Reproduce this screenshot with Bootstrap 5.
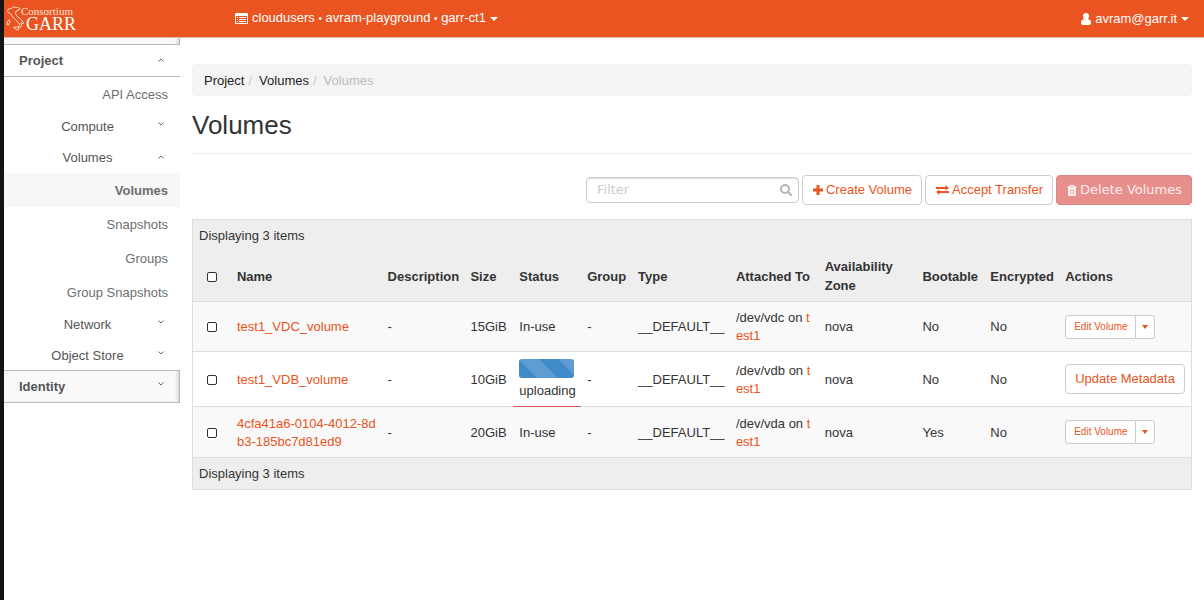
<!DOCTYPE html>
<html lang="en">
<head>
<meta charset="utf-8">
<meta name="viewport" content="width=device-width, initial-scale=1">
<title>Volumes</title>
<link href="https://cdn.jsdelivr.net/npm/bootstrap@5.3.0/dist/css/bootstrap.min.css" rel="stylesheet">
<style>
  :root { --brand: #ea5420; --line: #ddd; --edge: #ccc; }
  body { font: 13px/18px "Liberation Sans", Arial, sans-serif; color: #333; border-left: 4px solid #141414; min-height: 100vh; background: #fff; }
  a { color: var(--brand); text-decoration: none; }
  svg { display: block; fill: currentColor; }

  .topbar { background: var(--brand); border-bottom: 1px solid #d5bfb6; height: 38px; color: #fff; }
  .topbar a { color: #fff; gap: 4px; }
  .brand-box { width: 231px; }
  .account { margin-right: 15px; }
  .dot { font-size: 10px; }
  .tri { width: 0; height: 0; border: 4px solid transparent; border-top-color: currentColor; border-bottom: 0; }

  .side { width: 176px; color: #555; }
  .side a { display: flex; align-items: center; color: #555; }
  .side-stub { height: 7px; }
  .side-shade { background: #f9f9f9; border-right: 1px solid #b5b5b5; border-bottom: 1px solid #bbb; box-shadow: inset -3px 0 3px -1px #ddd; }
  .side .side-top { height: 32px; padding: 0 16px 0 15px; font-weight: 700; justify-content: space-between; }
  .side .side-open { border-bottom: 1px solid #bbb; }
  .side .side-closed { height: 33px; border-top: 1px solid #bbb; padding-right: 15px; margin-top: -1px; }
  .side .side-group { height: 31px; padding: 0 16px 0 13px; }
  .side-group span { flex: 1; text-align: center; }
  .side .side-leaf { height: 34px; padding: 1px 12px 0 0; justify-content: flex-end; color: #6e6e6e; }
  .side .side-leaf.current { background: #f7f7f7; font-weight: 700; }
  .chev { width: 6px; height: 4px; fill: none; stroke: #666; }
  .chev.down { margin-bottom: 5px; }
  .chev.up { margin-bottom: 1px; }

  .main-area { padding: 26px 12px; min-width: 0; }
  .crumbs { background: #f4f4f4; border-radius: 4px; padding: 8px 12px 6px; --bs-breadcrumb-divider: "/"; }
  .crumbs a { color: #222; }
  .crumbs .breadcrumb-item + .breadcrumb-item { padding-left: 4px; color: #bbb; }
  .crumbs .breadcrumb-item + .breadcrumb-item::before { color: #ccc; padding-right: 7px; }
  .page-title { font-size: 26px; line-height: 30px; font-weight: 400; padding: 14px 0 13px; border-bottom: 1px solid #eee; margin-bottom: 21px; }

  .tools { gap: 3px; margin-bottom: 14px; }
  .tools .btn, .meta-btn { font-size: 13px; line-height: 18px; padding: 5px 9px 5px 10px; border-radius: 4px; display: flex; align-items: center; gap: 3px; }
  .btn.meta-btn { padding: 5px 9px; }
  .btn-plain { color: var(--brand); background: #fff; border-color: var(--edge); }
  .btn-plain:hover { color: var(--brand); background: #eee; border-color: #aaa; }
  .tools .btn-del { font-family: "DejaVu Sans", sans-serif; color: #fcecec; background: #e78f8d; border-color: #e08280; opacity: 1; }
  .filter-box { width: 213px; }
  .filter-box .form-control { font: 13px/18px "DejaVu Sans", sans-serif; height: 26px; padding: 2px 28px 4px 10px; border-color: var(--edge); border-radius: 4px; box-shadow: inset 0 1px 1px #ddd; }
  .filter-box .form-control::placeholder { color: #ccc; }
  .filter-box svg { right: 7px; top: 7px; color: #b5b5b5; }

  .vol-table { table-layout: fixed; width: 100%; border: 1px solid var(--line); border-collapse: separate; border-spacing: 0; }
  .vol-table th, .vol-table td { padding: 6px; vertical-align: middle; }
  .vol-table tbody td, .vol-table tfoot td { border-top: 1px solid var(--line); }
  .vol-table thead, .vol-table tfoot { background: #eee; }
  .vol-table thead tr:first-child td { height: 32px; }
  .vol-table thead th { height: 49px; line-height: 19px; padding: 5px 6px; white-space: nowrap; }
  .vol-table .wrap-head { white-space: normal; padding: 4px 6px 6px; }
  .vol-table tbody tr { height: 50px; }
  .vol-table tbody tr:nth-child(odd) { background: #f9f9f9; }
  .vol-table tbody tr + tr { height: 51px; }
  .vol-table tbody tr + tr td { padding-top: 8px; }
  .vol-table tbody tr + tr td:last-child { padding-top: 6px; }
  .vol-table tbody tr.busy { height: 55px; }
  .vol-table tfoot td { height: 32px; }
  .break-any { word-break: break-all; }
  .vol-table tbody .vol-name { padding-right: 2px; }
  .vol-table .pick { padding-left: 14px; }
  .pick input { display: block; appearance: none; width: 10px; height: 10px; border: 1px solid #333; border-radius: 2px; margin: 0; background: #fff; }
  .pick input:checked { background: #333; }
  .vol-table tbody tr.busy .busy-cell { padding-top: 7px; position: relative; z-index: 1; box-shadow: 0 1px 0 #d9534f; }
  .busy-bar { height: 19px; border-radius: 3px; margin-bottom: 4px; width: 55px; }
  .busy-bar .progress-bar { background-color: #428bca; background-size: 40px 40px; background-image: linear-gradient(45deg, rgba(255,255,255,.15) 25%, transparent 25%, transparent 50%, rgba(255,255,255,.15) 50%, rgba(255,255,255,.15) 75%, transparent 75%); }
  .row-act .btn { font-size: 10px; line-height: 14px; padding: 4px 7px 4px 8px; border-radius: 3px; }
  .row-act .btn.more { padding: 4px 6px; display: flex; align-items: center; }
  .more .tri { border-width: 4px 3px 0; }
</style>
</head>
<body>
<header class="topbar d-flex align-items-center">
  <a class="brand-box" href="#" aria-label="Consortium GARR">
    <svg width="76" height="34" viewBox="0 0 76 34">
      <path d="M3.500 9l1-2 3-.5 2-1.500 4 .5 2.500 1-1 1.500-3 1-.5 2.500 1.500 3 3.500 2.500 3 3.500-.5 1.500-2-1.500.5 3-2 2.500-1-.5 1-3-2.500-3.500-4-3.500-2.500-4-2-.5zM3.500 19.500l2-1.500.5 2-1.500 3-1.500-.5zM9.500 25.500l2.500-.5 2.500 0-.5 3-2-.5z" fill="none" stroke="#fbd5c8"/>
      <text x="17" y="13" font-family="Liberation Serif, serif" font-size="11" fill="#fde3da">Consortium</text>
      <text x="22" y="28" font-family="Liberation Serif, serif" font-size="18" fill="#fff">GARR</text>
    </svg>
  </a>
  <a class="d-flex align-items-center" href="#">
    <svg width="13" height="11" viewBox="0 0 13 11"><path fill-rule="evenodd" d="M1 0h11a1 1 0 0 1 1 1v9a1 1 0 0 1-1 1H1a1 1 0 0 1-1-1V1a1 1 0 0 1 1-1zM1 3v7h11V3zM2 4h1v1H2zM4 4h7v1H4zM2 6h1v1H2zM4 6h7v1H4zM2 8h1v1H2zM4 8h7v1H4z"/></svg>
    <span>cloudusers <span class="dot">•</span> avram-playground <span class="dot">•</span> garr-ct1</span><span class="tri"></span>
  </a>
  <a class="account d-flex align-items-center ms-auto" href="#">
    <svg width="10" height="12" viewBox="0 0 10 12"><path d="M5 0a3 3 0 0 1 3 3c0 1.500-.6 2.600-1.300 3.200C8.800 6 10 7.500 10 10c0 1.200-.8 2-2 2H2c-1.200 0-2-.8-2-2 0-2.500 1.200-4 3.300-3.800C2.600 5.600 2 4.500 2 3a3 3 0 0 1 3-3z"/></svg>
    <span>avram@garr.it</span><span class="tri"></span>
  </a>
</header>

<div class="d-flex">
  <nav class="side flex-shrink-0" aria-label="Dashboard">
    <div class="side-stub side-shade"></div>
    <a class="side-top side-open" href="#">Project <svg class="chev up" viewBox="0 0 6 4"><path d="M.5 3.500L3 1l2.500 2.500"/></svg></a>
    <a class="side-leaf" href="#">API Access</a>
    <a class="side-group" href="#"><span>Compute</span><svg class="chev down" viewBox="0 0 6 4"><path d="M.5.5L3 3 5.500.5"/></svg></a>
    <a class="side-group" href="#"><span>Volumes</span><svg class="chev up" viewBox="0 0 6 4"><path d="M.5 3.500L3 1l2.500 2.500"/></svg></a>
    <a class="side-leaf current" href="#">Volumes</a>
    <a class="side-leaf" href="#">Snapshots</a>
    <a class="side-leaf" href="#">Groups</a>
    <a class="side-leaf" href="#">Group Snapshots</a>
    <a class="side-group" href="#"><span>Network</span><svg class="chev down" viewBox="0 0 6 4"><path d="M.5.5L3 3 5.500.5"/></svg></a>
    <a class="side-group" href="#"><span>Object Store</span><svg class="chev down" viewBox="0 0 6 4"><path d="M.5.5L3 3 5.500.5"/></svg></a>
    <a class="side-top side-closed side-shade" href="#">Identity <svg class="chev down" viewBox="0 0 6 4"><path d="M.5.5L3 3 5.500.5"/></svg></a>
  </nav>

  <main class="main-area flex-grow-1">
    <nav aria-label="breadcrumb">
      <ol class="breadcrumb crumbs mb-0">
        <li class="breadcrumb-item"><a href="#">Project</a></li>
        <li class="breadcrumb-item"><a href="#">Volumes</a></li>
        <li class="breadcrumb-item active" aria-current="page">Volumes</li>
      </ol>
    </nav>
    <h1 class="page-title">Volumes</h1>

    <div class="tools d-flex justify-content-end align-items-center">
      <div class="filter-box position-relative">
        <input class="form-control" type="text" placeholder="Filter" aria-label="Filter">
        <svg class="position-absolute" width="12" height="12" viewBox="0 0 12 12"><path d="M8 8l3 3" stroke="currentColor" stroke-width="2" stroke-linecap="round"/><circle cx="5" cy="5" r="4" fill="none" stroke="currentColor" stroke-width="2"/></svg>
      </div>
      <button class="btn btn-plain" type="button"><svg width="10" height="10" viewBox="0 0 10 10"><path d="M3.500 0h3v3.500H10v3H6.500V10h-3V6.500H0v-3h3.500z"/></svg>Create Volume</button>
      <button class="btn btn-plain" type="button"><svg width="13" height="10" viewBox="0 0 13 10"><path d="M0 2h9.500V0L13 3 9.500 5.500V4H0zM13 8H3.500v2L0 7l3.500-2.500V6H13z"/></svg>Accept Transfer</button>
      <button class="btn btn-del" type="button" disabled><svg width="10" height="11" viewBox="0 0 10 11"><path fill-rule="evenodd" d="M3 0h4l1 1.500h2v1H9V10a1 1 0 0 1-1 1H2a1 1 0 0 1-1-1V2.500H0v-1h2zM3.500 1l-.3.500h3.600L6.500 1zM3 4v5h.5V4zM4.800 4v5h.5V4zM6.500 4v5h.5V4z"/></svg>Delete Volumes</button>
    </div>

    <table class="vol-table">
      <colgroup>
        <col style="width:3.8%"><col style="width:15.100%"><col style="width:8.3%"><col style="width:4.9%"><col style="width:6.8%"><col style="width:5.100%"><col style="width:9.8%"><col style="width:8.9%"><col style="width:9.8%"><col style="width:6.8%"><col style="width:7.500%"><col>
      </colgroup>
      <thead>
        <tr><td colspan="12">Displaying 3 items</td></tr>
        <tr>
          <th class="pick"><input type="checkbox" aria-label="Select all"></th>
          <th>Name</th><th>Description</th><th>Size</th><th>Status</th><th>Group</th><th>Type</th><th>Attached To</th><th class="wrap-head">Availability Zone</th><th>Bootable</th><th>Encrypted</th><th>Actions</th>
        </tr>
      </thead>
      <tbody>
        <tr>
          <td class="pick"><input type="checkbox" aria-label="Select test1_VDC_volume"></td>
          <td class="vol-name break-any"><a href="#">test1_VDC_volume</a></td><td>-</td><td>15GiB</td><td>In-use</td><td>-</td><td>__DEFAULT__</td>
          <td class="break-any">/dev/vdc on <a href="#">test1</a></td><td>nova</td><td>No</td><td>No</td>
          <td><div class="btn-group row-act"><button class="btn btn-plain" type="button">Edit Volume</button><button class="btn btn-plain more" type="button" aria-label="More actions"><span class="tri"></span></button></div></td>
        </tr>
        <tr class="busy">
          <td class="pick"><input type="checkbox" aria-label="Select test1_VDB_volume"></td>
          <td class="vol-name break-any"><a href="#">test1_VDB_volume</a></td><td>-</td><td>10GiB</td>
          <td class="busy-cell"><div class="progress busy-bar"><div class="progress-bar w-100"></div></div>uploading</td><td>-</td><td>__DEFAULT__</td>
          <td class="break-any">/dev/vdb on <a href="#">test1</a></td><td>nova</td><td>No</td><td>No</td>
          <td><button class="btn btn-plain meta-btn" type="button">Update Metadata</button></td>
        </tr>
        <tr>
          <td class="pick"><input type="checkbox" aria-label="Select 4cfa41a6-0104-4012-8db3-185bc7d81ed9"></td>
          <td class="vol-name break-any"><a href="#">4cfa41a6-0104-4012-8db3-185bc7d81ed9</a></td><td>-</td><td>20GiB</td><td>In-use</td><td>-</td><td>__DEFAULT__</td>
          <td class="break-any">/dev/vda on <a href="#">test1</a></td><td>nova</td><td>Yes</td><td>No</td>
          <td><div class="btn-group row-act"><button class="btn btn-plain" type="button">Edit Volume</button><button class="btn btn-plain more" type="button" aria-label="More actions"><span class="tri"></span></button></div></td>
        </tr>
      </tbody>
      <tfoot><tr><td colspan="12">Displaying 3 items</td></tr></tfoot>
    </table>
  </main>
</div>
<script src="https://cdn.jsdelivr.net/npm/bootstrap@5.3.0/dist/js/bootstrap.bundle.min.js"></script>
</body>
</html>
